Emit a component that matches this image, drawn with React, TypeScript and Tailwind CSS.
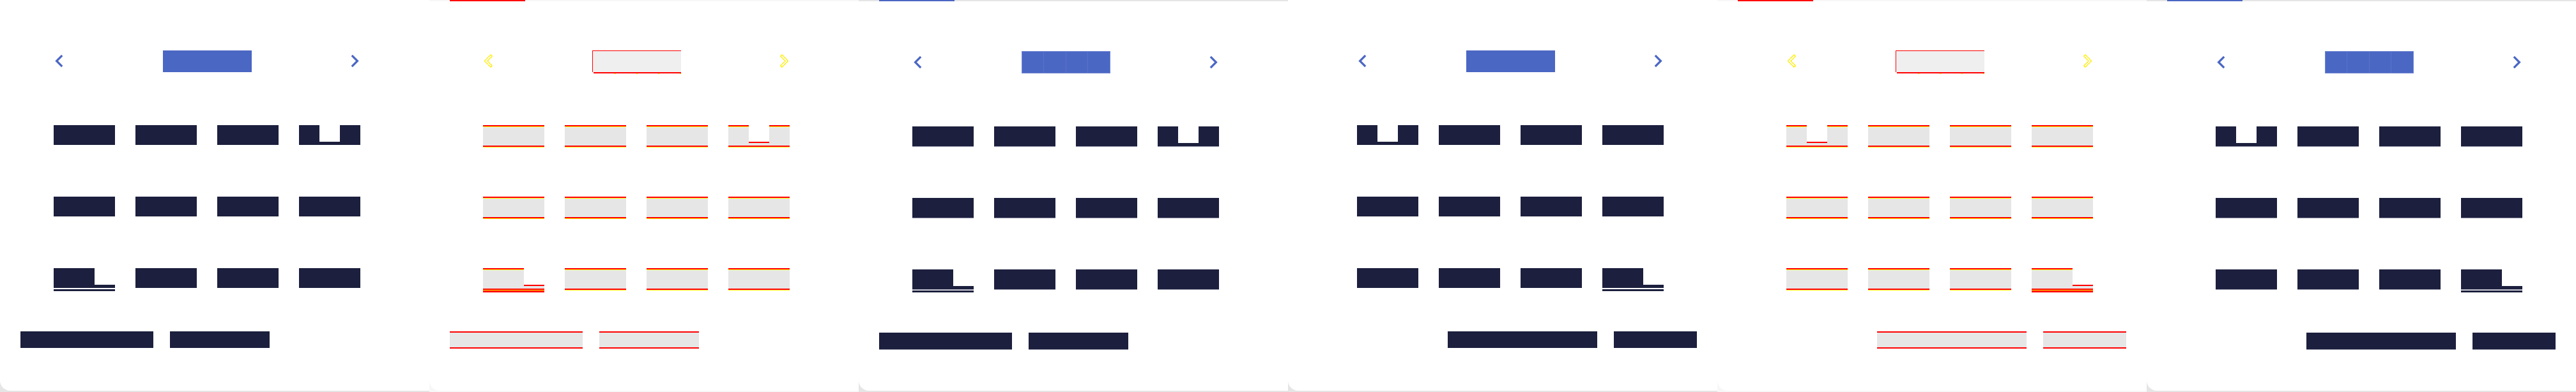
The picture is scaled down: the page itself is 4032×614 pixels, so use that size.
type Variant = "base" | "diff" | "shifted";
type Kind = "plain" | "notch" | "under";

const NAVY = "bg-[#1c1f3d]";
const BLUE = "bg-[#4b67c4]";
const RED = "bg-[#ff0000]";
const YEL = "bg-[#ffff00]";
const GRAY = "bg-[#e6e6e6]";

const panels: { variant: Variant; rtl: boolean }[] = [
  { variant: "base", rtl: false },
  { variant: "diff", rtl: false },
  { variant: "shifted", rtl: false },
  { variant: "base", rtl: true },
  { variant: "diff", rtl: true },
  { variant: "shifted", rtl: true },
];

function Chevron({ dir, variant }: { dir: "left" | "right"; variant: Variant }) {
  const d =
    dir === "left"
      ? "M15.41 7.41 14 6l-6 6 6 6 1.41-1.41L10.83 12z"
      : "M10 6 8.59 7.41 13.17 12l-4.58 4.59L10 18l6-6z";
  const box = dir === "left" ? "7.8 5.7 8 12.6" : "8.2 5.7 8 12.6";
  if (variant === "diff") {
    return (
      <svg width="13" height="21" viewBox={box} className="shrink-0">
        <path d={d} fill="#ffffff" stroke="#ffff00" strokeWidth="0.75" strokeLinejoin="miter" />
        <path d={d} fill="none" stroke="#ff0000" strokeWidth="0.25" strokeDasharray="0.6 1.4" />
      </svg>
    );
  }
  return (
    <svg width="13" height="21" viewBox={box} className="shrink-0">
      <path d={d} fill="#4b67c4" />
    </svg>
  );
}

function Header({ variant }: { variant: Variant }) {
  if (variant === "diff") {
    return (
      <div className="flex w-[139px] flex-col">
        <div className={`h-[1px] ${RED}`} />
        <div className="flex h-[33px]">
          <div className={`w-[1px] ${RED}`} />
          <div className="flex-1 bg-[#efefef]" />
        </div>
        <div className={`ml-[2px] h-[2px] ${RED}`} />
        <div className="flex h-[1px]">
          <div className={`ml-[35px] w-[2px] ${YEL}`} />
          <div className={`ml-[32px] w-[2px] ${YEL}`} />
          <div className={`ml-[32px] w-[2px] ${YEL}`} />
          <div className={`ml-[32px] w-[2px] ${YEL}`} />
        </div>
      </div>
    );
  }
  if (variant === "shifted") {
    return (
      <div className={`-mt-[1px] flex h-[35px] w-[139px] border border-[#7188d3] ${BLUE}`}>
        <div className="flex-1 border-r border-[#5a73c7]" />
        <div className="flex-1 border-r border-[#5a73c7]" />
        <div className="flex-1 border-r border-[#5a73c7]" />
        <div className="flex-1" />
      </div>
    );
  }
  return <div className={`h-[34px] w-[139px] ${BLUE}`} />;
}

function NotchBody({ variant }: { variant: Variant }) {
  return (
    <div className="flex w-[32px] flex-col">
      <div className="h-[26px]" />
      <div className={`flex-1 ${NAVY}`} />
    </div>
  );
}

function DiffCol({ className }: { className: string }) {
  return (
    <div className={`flex flex-col ${className}`}>
      <div className={`h-[2px] ${RED}`} />
      <div className={`h-[1px] ${YEL}`} />
      <div className={`h-[29px] ${GRAY}`} />
      <div className={`h-[2px] ${RED}`} />
      <div className={`h-[1px] ${YEL}`} />
    </div>
  );
}

function Cell({ variant, kind }: { variant: Variant; kind: Kind }) {
  if (variant === "diff") {
    if (kind === "plain") return <DiffCol className="w-[96px]" />;
    if (kind === "notch")
      return (
        <div className="flex w-[96px]">
          <DiffCol className="w-[32px]" />
          <div className="flex w-[32px] flex-col">
            <div className="h-[26px]" />
            <div className={`h-[2px] ${RED}`} />
            <div className={`h-[4px] ${GRAY}`} />
            <div className={`h-[2px] ${RED}`} />
            <div className={`h-[1px] ${YEL}`} />
          </div>
          <DiffCol className="w-[32px]" />
        </div>
      );
    return (
      <div className="flex w-[96px] flex-col">
        <div className="flex h-[32px]">
          <div className="flex w-[64px] flex-col">
            <div className={`h-[2px] ${RED}`} />
            <div className={`h-[1px] ${YEL}`} />
            <div className={`flex-1 ${GRAY}`} />
          </div>
          <div className="flex w-[32px] flex-col">
            <div className="h-[26px]" />
            <div className={`h-[2px] ${RED}`} />
            <div className={`flex-1 ${GRAY}`} />
          </div>
        </div>
        <div className={`h-[2px] ${RED}`} />
        <div className={`h-[1px] ${YEL}`} />
        <div className={`h-[3px] ${RED}`} />
      </div>
    );
  }

  const shifted = variant === "shifted";
  const h = shifted ? "h-[32px] border-b border-[#9799ae]" : "h-[31px]";

  if (kind === "plain") return <div className={`w-[96px] ${h} ${NAVY}`} />;
  if (kind === "notch")
    return (
      <div className={`flex w-[96px] ${h}`}>
        <div className={`w-[32px] ${NAVY}`} />
        <NotchBody variant={variant} />
        <div className={`w-[32px] ${NAVY}`} />
      </div>
    );
  return (
    <div className="flex w-[96px] flex-col">
      <div className={`flex ${h}`}>
        <div className={`w-[64px] ${NAVY}`} />
        <NotchBody variant={variant} />
      </div>
      <div className={`${shifted ? "mt-[1px]" : "mt-[2px]"} h-[3px] ${NAVY}`} />
    </div>
  );
}

function Button({ variant, w }: { variant: Variant; w: string }) {
  if (variant === "diff")
    return (
      <div className={`flex h-[27px] flex-col ${w}`}>
        <div className={`h-[2px] ${RED}`} />
        <div className={`flex-1 ${GRAY}`} />
        <div className={`h-[2px] ${RED}`} />
      </div>
    );
  if (variant === "shifted")
    return <div className={`h-[27px] border-b border-[#9799ae] ${NAVY} ${w}`} />;
  return <div className={`h-[26px] ${NAVY} ${w}`} />;
}

function Panel({ variant, rtl }: { variant: Variant; rtl: boolean }) {
  const kinds = (row: number): Kind[] => {
    const k: Kind[] = ["plain", "plain", "plain", "plain"];
    if (row === 0) k[rtl ? 0 : 3] = "notch";
    if (row === 2) k[rtl ? 3 : 0] = "under";
    return k;
  };
  const inner = rtl ? "pl-[108px] pr-[84px]" : "pl-[84px] pr-[108px]";
  const outerBg = variant === "diff" ? "bg-[#f7f7f7]" : "bg-[#e5e5e5]";

  return (
    <div className={`flex h-[614px] w-[672px] shrink-0 flex-col overflow-hidden ${outerBg}`}>
      {variant !== "base" && (
        <div className="flex h-[2px] shrink-0 pl-[32px]">
          <div className={`w-[118px] ${variant === "diff" ? RED : BLUE}`} />
        </div>
      )}
      <div
        className={`mb-[2px] flex flex-1 flex-col rounded-bl-[16px] bg-white ${
          variant === "diff" ? "pt-[77px]" : "pt-[79px]"
        }`}
      >
        <div className={`flex h-[34px] items-start justify-between ${inner}`}>
          <div className="mt-[6px] ml-[2px] flex">
            <Chevron dir="left" variant={variant} />
          </div>
          <Header variant={variant} />
          <div className="mt-[6px] mr-[2px] flex">
            <Chevron dir="right" variant={variant} />
          </div>
        </div>

        <div className={`mt-[83px] flex flex-col gap-[81px] ${inner}`}>
          {[0, 1, 2].map((r) => (
            <div key={r} className="flex h-[31px] items-start gap-[32px]">
              {kinds(r).map((k, i) => (
                <Cell key={i} variant={variant} kind={k} />
              ))}
            </div>
          ))}
        </div>

        <div className={`mt-[68px] flex gap-[26px] px-[32px] ${rtl ? "justify-end" : ""}`}>
          {rtl ? (
            <>
              <Button variant={variant} w="w-[234px]" />
              <Button variant={variant} w="w-[130px]" />
            </>
          ) : (
            <>
              <Button variant={variant} w="w-[208px]" />
              <Button variant={variant} w="w-[156px]" />
            </>
          )}
        </div>
      </div>
    </div>
  );
}

export default function App() {
  return (
    <div className="flex h-[614px] w-[4032px] bg-white font-['Liberation_Sans',sans-serif]">
      {panels.map((p, i) => (
        <Panel key={i} variant={p.variant} rtl={p.rtl} />
      ))}
    </div>
  );
}
